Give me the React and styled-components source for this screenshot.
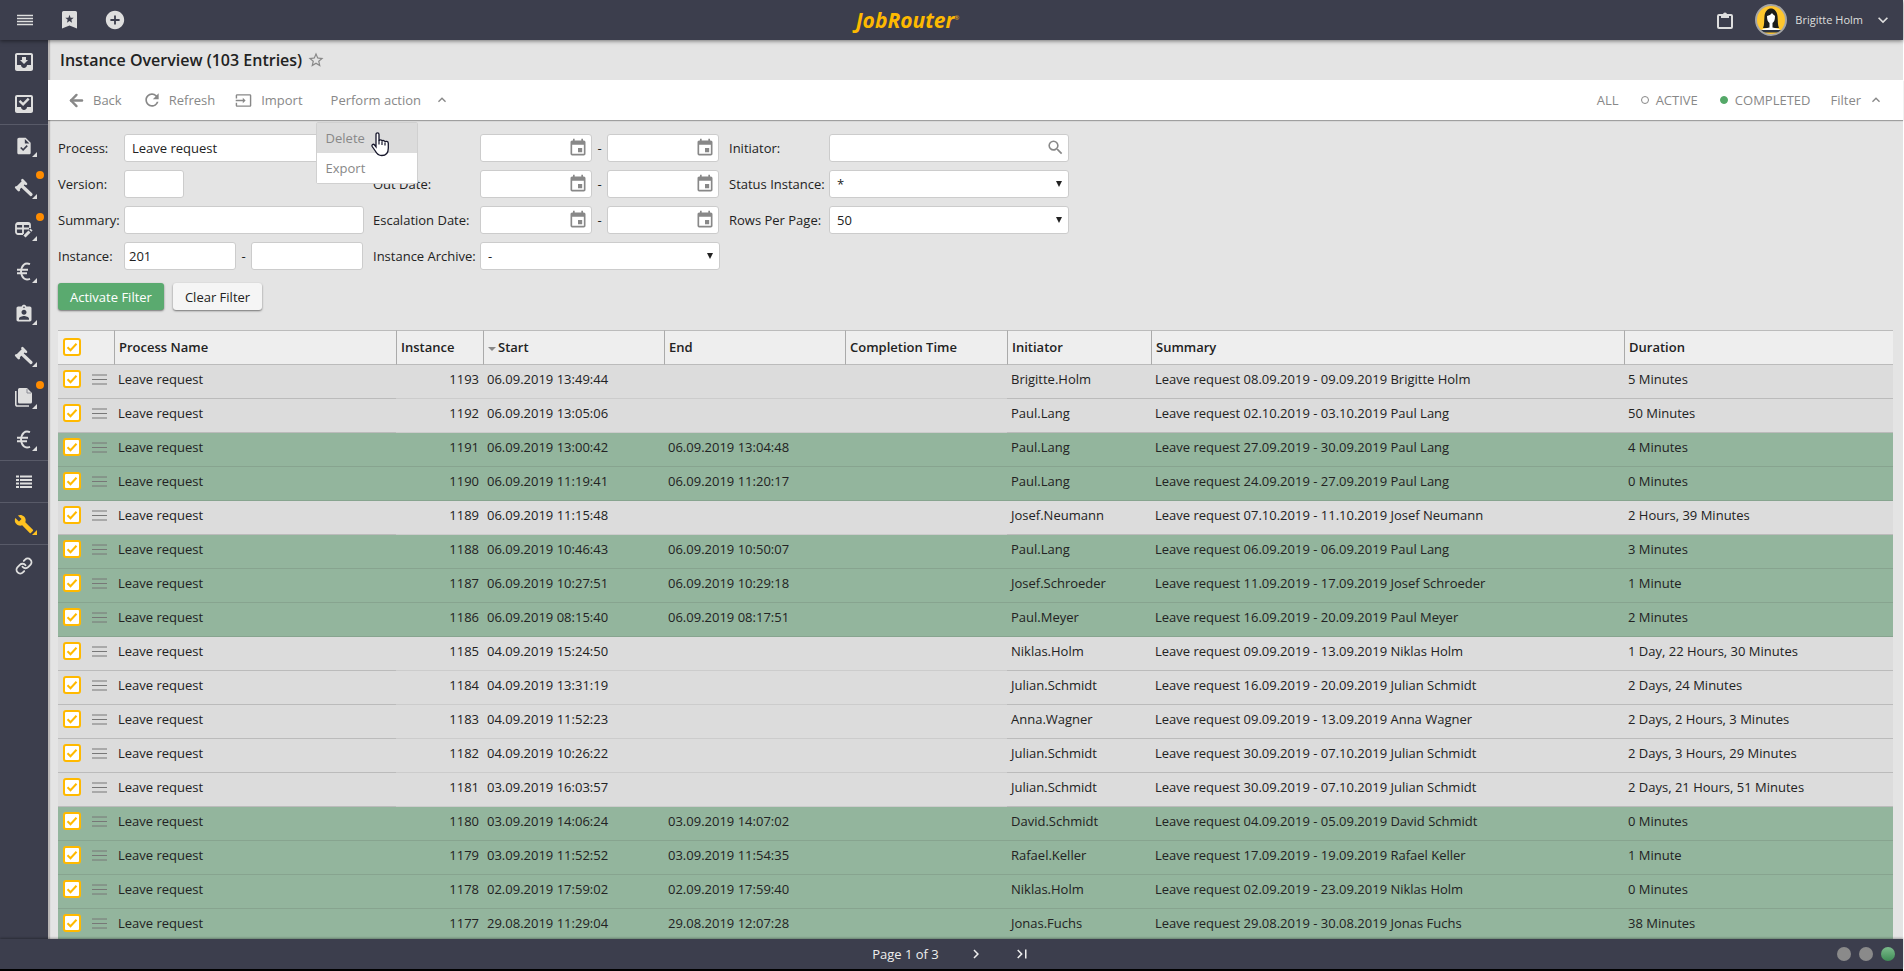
import React from "react";
import styled, { createGlobalStyle } from "styled-components";
import { ArrowLeft, Link as LinkIcon } from "lucide-react";
import {
  MdAddCircle,
  MdAssignmentInd,
  MdBuild,
  MdChevronRight,
  MdEvent,
  MdInput,
  MdKeyboardArrowDown,
  MdKeyboardArrowUp,
  MdLastPage,
  MdMoveToInbox,
  MdRefresh,
  MdSearch,
  MdStarBorder,
  MdTask,
} from "react-icons/md";

const GlobalStyle = createGlobalStyle`
  * {
    box-sizing: border-box;
  }
  body {
    margin: 0;
    background-color: white;
    color: #222;
    font-family: "Open Sans", "Noto Sans", sans-serif;
    font-size: 13px;
    line-height: 18px;
  }
  button, input, select {
    font: inherit;
    color: inherit;
    margin: 0;
  }
  a {
    color: inherit;
    text-decoration: none;
  }
`;

const Page = styled.div`
  height: 100vh;
  display: flex;
  flex-direction: column;
  padding-right: 1px;
  overflow: hidden;
`;

const Bare = styled.button`
  display: flex;
  align-items: center;
  padding: 0;
  border: none;
  background: none;
  cursor: pointer;
`;

/* top bar */
const TopBar = styled.header`
  flex: none;
  display: grid;
  grid-template-columns: 1fr auto 1fr;
  align-items: center;
  height: 40px;
  padding: 0 10px 0 2px;
  background-color: #3c3e4d;
  color: #dedede;
  box-shadow: 0 1px 4px rgba(0, 0, 0, 0.5);
  z-index: 3;
`;
const TopLeft = styled.div`
  display: flex;
  align-items: center;
`;
const TopButton = styled(Bare)`
  justify-content: center;
  width: 45px;
`;
const TopRight = styled.div`
  display: flex;
  align-items: center;
  justify-content: flex-end;
  font-size: 11px;
`;
const Logo = styled.a`
  display: flex;
  align-items: flex-start;
  margin-right: 80px;
  color: #fdb900;
  font-size: 21px;
  font-style: italic;
  font-weight: 700;
  line-height: 28px;
`;
const Reg = styled.span`
  font-size: 6px;
  line-height: 24px;
  font-style: normal;
  font-weight: 400;
`;
const User = styled(Bare)`
  gap: 8px;
  margin-left: 22px;
`;
const UserName = styled.span`
  margin-right: 2px;
`;

/* side bar */
const Body = styled.div`
  flex: 1;
  min-height: 0;
  display: flex;
`;
const SideBar = styled.nav`
  flex: none;
  width: 48px;
  padding-top: 1px;
  background-color: #3c3e4d;
  color: #dedede;
  box-shadow: 2px 0 1px #b9b6b6;
  z-index: 1;
`;
const SideItem = styled.a`
  position: relative;
  display: flex;
  align-items: center;
  justify-content: center;
  height: 42px;
  padding-right: 1px;
  border-bottom: 1px solid ${(props) => (props.$line ? "#585a68" : "transparent")};
  color: ${(props) => (props.$active ? "#ffc220" : "inherit")};

  ${(props) =>
    props.$more &&
    `&::after {
      content: "";
      position: absolute;
      right: 11px;
      bottom: 9px;
      border-left: 5px solid transparent;
      border-bottom: 5px solid currentColor;
    }`}
`;
const Dot = styled.span`
  position: absolute;
  top: 4px;
  right: 4px;
  width: 8px;
  height: 8px;
  border-radius: 50%;
  background-color: #ff8c00;
`;

/* main */
const Main = styled.main`
  flex: 1;
  min-width: 0;
  display: flex;
  flex-direction: column;
  background-color: #e4e4e4;
`;
const TitleBar = styled.div`
  flex: none;
  display: flex;
  align-items: center;
  gap: 5px;
  height: 40px;
  padding-left: 12px;
  color: #888;
`;
const Title = styled.h1`
  margin: 0;
  color: #222;
  font-size: 16px;
  line-height: 24px;
  font-weight: 600;
`;
const ToolBar = styled.div`
  flex: none;
  display: flex;
  align-items: center;
  justify-content: space-between;
  height: 40px;
  padding: 0 19px;
  background-color: white;
  color: #888;
  box-shadow: 0 1px 1px rgba(0, 0, 0, 0.3);
  z-index: 2;
`;
const Tools = styled.div`
  display: flex;
  align-items: center;
  gap: ${(props) => props.$gap}px;
`;
const Tool = styled(Bare)`
  gap: ${(props) => props.$gap || 7}px;
`;
const Status = styled.span`
  width: 8px;
  height: 8px;
  border: 1px solid ${(props) => (props.$on ? "#54a868" : "#888")};
  border-radius: 50%;
  background-color: ${(props) => (props.$on ? "#54a868" : "transparent")};
`;
const MenuWrap = styled.div`
  position: relative;
  margin-left: 8px;
`;
const Menu = styled.div`
  position: absolute;
  top: 31px;
  left: -15px;
  width: 102px;
  border: 1px solid #d0d0d0;
  border-radius: 2px;
  background-color: white;
`;
const MenuItem = styled(Bare)`
  width: 100%;
  height: 30px;
  padding-left: 9px;
  background-color: ${(props) => (props.$hover ? "#dcdcdc" : "white")};
`;
const Pointer = styled.svg`
  position: absolute;
  top: 9px;
  left: 54px;
`;

const Content = styled.div`
  flex: 1;
  min-height: 0;
  overflow: hidden;
  padding: 14px 10px 0 10px;
`;

/* filter form */
const Form = styled.form`
  margin-bottom: 20px;
`;
const Columns = styled.div`
  display: flex;
  align-items: flex-start;
  gap: 9px;
`;
const Column = styled.div`
  display: grid;
  grid-template-columns: ${(props) => props.$label}px 240px;
  grid-auto-rows: 28px;
  row-gap: 8px;
  align-items: center;
`;
const Pair = styled.div`
  display: grid;
  grid-template-columns: 112px 15px 112px;
  align-items: center;
  text-align: center;
`;
const Field = styled.div`
  position: relative;
  color: #888;

  svg {
    position: absolute;
    top: ${(props) => props.$top || 4}px;
    right: ${(props) => props.$right || 4}px;
    pointer-events: none;
  }
`;
const Input = styled.input`
  display: block;
  width: ${(props) => (props.$short ? "60px" : "100%")};
  height: 28px;
  padding: 0 ${(props) => props.$pad || 4}px;
  border: 1px solid #ccc;
  border-radius: 3px;
  background-color: white;
  color: #222;
`;
const Select = styled.select`
  display: block;
  width: 100%;
  height: 28px;
  padding: 0 7px;
  border: 1px solid #ccc;
  border-radius: 3px;
  background-color: white;
  color: #222;
  appearance: none;
`;
const Buttons = styled.div`
  display: flex;
  gap: 9px;
  margin-top: 13px;
`;
const Button = styled.button`
  height: 27px;
  padding: 0 12px;
  border: none;
  border-radius: 3px;
  background-color: ${(props) => (props.$primary ? "#5aaa6f" : "#f5f5f5")};
  color: ${(props) => (props.$primary ? "white" : "#222")};
  box-shadow: 0 1px 2px rgba(0, 0, 0, 0.5);
`;

/* table */
const Table = styled.table`
  width: 100%;
  table-layout: fixed;
  border-collapse: separate;
  border-spacing: 0;
`;
const Th = styled.th`
  height: 35px;
  padding: 0 4px 1px 4px;
  border-top: 1px solid #bbb;
  border-bottom: 1px solid #bbb;
  border-left: ${(props) => (props.$first ? "none" : "1px solid #aaa")};
  background-color: #eee;
  font-weight: 600;
  text-align: left;
  white-space: nowrap;
`;
const Td = styled.td`
  height: 34px;
  padding: 5px 4px 0 4px;
  border-bottom: 1px solid ${(props) => (props.$strong ? "#bbb" : "#ccc")};
  text-align: ${(props) => (props.$right ? "right" : "left")};
  vertical-align: top;
  white-space: nowrap;
  overflow: hidden;
`;
const Tr = styled.tr`
  background-color: ${(props) => (props.$done ? "#93b59d" : "#dcdcdc")};

  ${Td} {
    ${(props) => props.$done && "border-bottom-color: #87a48f;"}
  }
`;
const CheckCell = styled.div`
  display: flex;
  align-items: center;
  gap: 11px;
  padding-left: 1px;
  color: #777;
`;
const CheckWrap = styled.span`
  position: relative;
  width: 18px;
  height: 18px;

  svg {
    position: absolute;
    top: 0;
    left: 0;
    pointer-events: none;
  }
`;
const CheckBox = styled.input`
  display: block;
  width: 18px;
  height: 18px;
  border: 2px solid #ffb900;
  border-radius: 3px;
  background-color: white;
  appearance: none;
`;
const SortArrow = styled.span`
  display: inline-block;
  margin-right: 2px;
  border: 4px solid transparent;
  border-top-color: #888;
  border-bottom: none;
  vertical-align: middle;
`;

/* footer */
const Footer = styled.footer`
  flex: none;
  display: grid;
  grid-template-columns: 1fr auto 1fr;
  align-items: center;
  height: 30px;
  padding: 0 8px;
  background-color: #3c3e4d;
  color: #eee;
  z-index: 3;
  box-shadow: 0 -1px 2px rgba(0, 0, 0, 0.3);
`;
const Pager = styled.div`
  grid-column: 2;
  display: flex;
  align-items: center;
  gap: 28px;
  font-weight: 500;
`;
const Lights = styled.div`
  display: flex;
  justify-content: flex-end;
  gap: 8px;
`;
const Light = styled.span`
  width: 14px;
  height: 14px;
  border-radius: 50%;
  background: ${(props) =>
    props.$on ? "linear-gradient(#7cbc8c, #3f8c56)" : "#8a8a8a"};
`;
const Bottom = styled.div`
  flex: none;
  height: 2px;
  background-color: black;
`;

const MenuLines = () => (
  <svg width="16" height="12" viewBox="0 0 16 12" stroke="currentColor">
    <path d="M0 1.500h16M0 4.500h16M0 7.500h16M0 10.500h16" strokeWidth="1.400" />
  </svg>
);
const BookmarkStar = () => (
  <svg width="15" height="18" viewBox="0 0 15 18">
    <path d="M1.500 0h12a1.500 1.500 0 0 1 1.500 1.500V17.500l-7.500-3-7.500 3V1.500A1.500 1.500 0 0 1 1.500 0z" fill="currentColor" />
    <path d="M7.500 3.800l1.100 2.900 3.100.1-2.400 1.900.8 3-2.600-1.700-2.600 1.700.8-3-2.400-1.900 3.100-.1z" fill="#3c3e4d" />
  </svg>
);
const ClipboardIcon = () => (
  <svg width="16" height="17" viewBox="0 0 16 17" fill="none" stroke="currentColor">
    <rect x="1" y="3" width="14" height="13" rx="1" strokeWidth="2" />
    <path d="M4 2.500h2a2 2 0 0 1 4 0h2V6H4z" fill="currentColor" stroke="none" />
  </svg>
);
const Avatar = () => (
  <svg width="32" height="32" viewBox="0 0 32 32">
    <circle cx="16" cy="16" r="15" fill="#ffc62d" />
    <path d="M8 24c1.500-3 1-7 1.500-12 .5-5 3.500-7.500 6.500-7.500s6 2.500 6.500 7.500c.5 5 0 9 1.500 12z" fill="#1d1d1b" />
    <path d="M12 12c2-.5 4-1.500 5-3 1 1.500 2 2 3 3 0 4-1 6-2.500 7v4.500l7 1.500v2h-17v-2l7-1.500V19c-1.500-1-2.500-3-2.500-7z" fill="white" />
    <path d="M5 26h22l-3 2.500H8z" fill="#2b3342" />
    <circle cx="16" cy="16" r="15" fill="none" stroke="#a5a5a5" strokeWidth="2" />
  </svg>
);
const InboxCheck = () => (
  <svg width="24" height="24" viewBox="0 0 24 24" fill="currentColor">
    <path d="M19 3H5a2 2 0 0 0-2 2v14c0 1.100.9 2 2 2h14c1.100 0 2-.9 2-2V5a2 2 0 0 0-2-2zm0 12h-4c0 1.660-1.350 3-3 3s-3-1.340-3-3H5V5h14z" />
    <path d="M7.500 8.800l3.600 3.600 5.600-5.800" fill="none" stroke="currentColor" strokeWidth="2.400" />
  </svg>
);
const Hammer = () => (
  <svg width="20" height="20" viewBox="0 0 20 20" stroke="currentColor" fill="none">
    <path d="M4 10l6-6" strokeWidth="4.500" />
    <path d="M2.200 9.400l2.600 2.600M8.400 2.200l3.600 3.600" strokeWidth="2.600" strokeLinecap="round" />
    <path d="M8 8l9 8.500" strokeWidth="3.200" strokeLinecap="round" />
  </svg>
);
const TableEdit = () => (
  <svg width="18" height="18" viewBox="0 0 18 18" stroke="currentColor" fill="none">
    <path d="M8 13H3a2 2 0 0 1-2-2V4a2 2 0 0 1 2-2h10a2 2 0 0 1 2 2v3M1 7.500h13M8 2v11" strokeWidth="1.800" />
    <path d="M2 3h12" strokeWidth="2" />
    <path d="M9.500 15.500l5-5" strokeWidth="3" />
    <path d="M15.300 9.700l1.200-1.200" strokeWidth="3" />
  </svg>
);
const Pages = () => (
  <svg width="17" height="19" viewBox="0 0 17 19">
    <path d="M4.500 0H12l5 5v9a1.500 1.500 0 0 1-1.500 1.500h-11A1.500 1.500 0 0 1 3 14V1.500A1.500 1.500 0 0 1 4.500 0z" fill="currentColor" />
    <path d="M12 .8V5h4.200" fill="none" stroke="#8b8c95" />
    <path d="M.8 3v13.500a1.500 1.500 0 0 0 1.500 1.500H14" fill="none" stroke="currentColor" strokeWidth="1.600" />
  </svg>
);
const Euro = () => (
  <svg width="14" height="19" viewBox="0 0 14 19" stroke="currentColor" fill="none">
    <path d="M13 2.200C8 .2 4.500 3 4 9.500c.5 6.500 4 9.300 9 7.300M0 7.700h11M0 11.200h10" strokeWidth="1.900" />
  </svg>
);
const ListLines = () => (
  <svg width="16" height="14" viewBox="0 0 16 14" stroke="currentColor">
    <path d="M0 1.500h3M4 1.500h12M0 5h3M4 5h12M0 8.500h3M4 8.500h12M0 12h3M4 12h12" strokeWidth="2" />
  </svg>
);
const Burger = () => (
  <svg width="15" height="11" viewBox="0 0 15 11" stroke="currentColor">
    <path d="M0 1h15M0 5.500h15M0 10h15" strokeWidth="1" />
  </svg>
);
const DropArrow = () => (
  <svg width="6" height="6" viewBox="0 0 6 6">
    <path d="M0 0h6L3 6z" fill="#222" />
  </svg>
);
const HandPointer = () => (
  <Pointer width="19" height="25" viewBox="0 0 19 25">
    <path
      d="M5 2.500C5 .3 8 .3 8 2.500V9c.3-1.700 3-1.500 3 .3.500-1.300 3-1 3 .7.600-1.200 3.300-.8 3.300 1.200V16c0 5-2.300 7.500-6.500 7.500-3.500 0-5-1.500-6.500-4.500L1.200 14.500c-.8-1.800 1-3 2.400-1.500L5 14.800z"
      fill="white"
      stroke="#15152a"
      strokeWidth="1.300"
    />
    <path d="M8 8.500v4M11 9.500v3.500M14 10.500v3" stroke="#15152a" strokeWidth="1.200" />
  </Pointer>
);

const sideItems = [
  { name: "Inbox", icon: <MdMoveToInbox size={24} /> },
  { name: "Tasks", icon: <InboxCheck />, line: true },
  { name: "Processes", icon: <MdTask size={20} />, more: true },
  { name: "Tools", icon: <Hammer />, more: true, dot: true },
  { name: "Tables", icon: <TableEdit />, more: true, dot: true },
  { name: "Invoices", icon: <Euro />, more: true },
  { name: "Staff", icon: <MdAssignmentInd size={20} />, more: true },
  { name: "Orders", icon: <Hammer />, more: true },
  { name: "Documents", icon: <Pages />, more: true, dot: true },
  { name: "Payments", icon: <Euro />, more: true, line: true },
  { name: "Lists", icon: <ListLines />, line: true },
  { name: "Administration", icon: <MdBuild size={20} />, more: true, line: true, active: true },
  { name: "Links", icon: <LinkIcon size={18} strokeWidth={2.5} /> },
];

const columns = [
  { title: "Process Name", width: 282 },
  { title: "Instance", width: 87 },
  { title: "Start", width: 181, sort: true },
  { title: "End", width: 181 },
  { title: "Completion Time", width: 162 },
  { title: "Initiator", width: 144 },
  { title: "Summary", width: 473 },
  { title: "Duration" },
];

const rows = [
  [1193, "06.09.2019 13:49:44", "", "Brigitte.Holm", "08.09.2019 - 09.09.2019 Brigitte Holm", "5 Minutes"],
  [1192, "06.09.2019 13:05:06", "", "Paul.Lang", "02.10.2019 - 03.10.2019 Paul Lang", "50 Minutes"],
  [1191, "06.09.2019 13:00:42", "06.09.2019 13:04:48", "Paul.Lang", "27.09.2019 - 30.09.2019 Paul Lang", "4 Minutes"],
  [1190, "06.09.2019 11:19:41", "06.09.2019 11:20:17", "Paul.Lang", "24.09.2019 - 27.09.2019 Paul Lang", "0 Minutes"],
  [1189, "06.09.2019 11:15:48", "", "Josef.Neumann", "07.10.2019 - 11.10.2019 Josef Neumann", "2 Hours, 39 Minutes"],
  [1188, "06.09.2019 10:46:43", "06.09.2019 10:50:07", "Paul.Lang", "06.09.2019 - 06.09.2019 Paul Lang", "3 Minutes"],
  [1187, "06.09.2019 10:27:51", "06.09.2019 10:29:18", "Josef.Schroeder", "11.09.2019 - 17.09.2019 Josef Schroeder", "1 Minute"],
  [1186, "06.09.2019 08:15:40", "06.09.2019 08:17:51", "Paul.Meyer", "16.09.2019 - 20.09.2019 Paul Meyer", "2 Minutes"],
  [1185, "04.09.2019 15:24:50", "", "Niklas.Holm", "09.09.2019 - 13.09.2019 Niklas Holm", "1 Day, 22 Hours, 30 Minutes"],
  [1184, "04.09.2019 13:31:19", "", "Julian.Schmidt", "16.09.2019 - 20.09.2019 Julian Schmidt", "2 Days, 24 Minutes"],
  [1183, "04.09.2019 11:52:23", "", "Anna.Wagner", "09.09.2019 - 13.09.2019 Anna Wagner", "2 Days, 2 Hours, 3 Minutes"],
  [1182, "04.09.2019 10:26:22", "", "Julian.Schmidt", "30.09.2019 - 07.10.2019 Julian Schmidt", "2 Days, 3 Hours, 29 Minutes"],
  [1181, "03.09.2019 16:03:57", "", "Julian.Schmidt", "30.09.2019 - 07.10.2019 Julian Schmidt", "2 Days, 21 Hours, 51 Minutes"],
  [1180, "03.09.2019 14:06:24", "03.09.2019 14:07:02", "David.Schmidt", "04.09.2019 - 05.09.2019 David Schmidt", "0 Minutes"],
  [1179, "03.09.2019 11:52:52", "03.09.2019 11:54:35", "Rafael.Keller", "17.09.2019 - 19.09.2019 Rafael Keller", "1 Minute"],
  [1178, "02.09.2019 17:59:02", "02.09.2019 17:59:40", "Niklas.Holm", "02.09.2019 - 23.09.2019 Niklas Holm", "0 Minutes"],
  [1177, "29.08.2019 11:29:04", "29.08.2019 12:07:28", "Jonas.Fuchs", "29.08.2019 - 30.08.2019 Jonas Fuchs", "38 Minutes"],
];

const Check = ({ label }) => (
  <CheckWrap>
    <CheckBox type="checkbox" defaultChecked aria-label={label} />
    <svg width="18" height="18" viewBox="0 0 18 18">
      <path d="M4.500 9.200l3 3 6-6.400" fill="none" stroke="#ffb900" strokeWidth="2" />
    </svg>
  </CheckWrap>
);

const DateInput = ({ label, id }) => (
  <Field>
    <Input type="text" id={id} aria-label={label} />
    <MdEvent size={20} />
  </Field>
);

const DateRange = ({ label, id }) => (
  <Pair>
    <DateInput id={id} />
    <span>-</span>
    <DateInput label={`${label} to`} />
  </Pair>
);

const SelectField = ({ id, value }) => (
  <Field $top={11} $right={7}>
    <Select id={id} defaultValue={value}>
      <option value={value}>{value}</option>
    </Select>
    <DropArrow />
  </Field>
);

const FilterForm = () => (
  <Form>
    <Columns>
      <Column $label={66}>
        <label htmlFor="process">Process:</label>
        <Input id="process" $pad={7} defaultValue="Leave request" />
        <label htmlFor="version">Version:</label>
        <Input id="version" $short />
        <label htmlFor="summary">Summary:</label>
        <Input id="summary" />
        <label htmlFor="instance">Instance:</label>
        <Pair>
          <Input id="instance" defaultValue="201" />
          <span>-</span>
          <Input aria-label="Instance to" />
        </Pair>
      </Column>
      <Column $label={107}>
        <label htmlFor="start">Start:</label>
        <DateRange id="start" label="Start" />
        <label htmlFor="out">Out Date:</label>
        <DateRange id="out" label="Out Date" />
        <label htmlFor="escalation">Escalation Date:</label>
        <DateRange id="escalation" label="Escalation Date" />
        <label htmlFor="archive">Instance Archive:</label>
        <SelectField id="archive" value="-" />
      </Column>
      <Column $label={100}>
        <label htmlFor="initiator">Initiator:</label>
        <Field>
          <Input id="initiator" />
          <MdSearch size={19} />
        </Field>
        <label htmlFor="status">Status Instance:</label>
        <SelectField id="status" value="*" />
        <label htmlFor="rows">Rows Per Page:</label>
        <SelectField id="rows" value="50" />
      </Column>
    </Columns>
    <Buttons>
      <Button type="button" $primary>Activate Filter</Button>
      <Button type="button">Clear Filter</Button>
    </Buttons>
  </Form>
);

const InstanceTable = () => (
  <Table>
    <colgroup>
      <col width={56} />
      {columns.map((col) => (
        <col key={col.title} width={col.width} />
      ))}
    </colgroup>
    <thead>
      <tr>
        <Th $first>
          <CheckCell>
            <Check label="Select all" />
          </CheckCell>
        </Th>
        {columns.map((col) => (
          <Th key={col.title}>
            {col.sort && <SortArrow />}
            {col.title}
          </Th>
        ))}
      </tr>
    </thead>
    <tbody>
      {rows.map(([id, start, end, initiator, summary, duration]) => (
        <Tr key={id} $done={end !== ""}>
          <Td $strong>
            <CheckCell>
              <Check label={`Select ${id}`} />
              <Burger />
            </CheckCell>
          </Td>
          <Td $strong>Leave request</Td>
          <Td $right>{id}</Td>
          <Td>{start}</Td>
          <Td>{end}</Td>
          <Td />
          <Td $strong>{initiator}</Td>
          <Td $strong>Leave request {summary}</Td>
          <Td $strong>{duration}</Td>
        </Tr>
      ))}
    </tbody>
  </Table>
);

const App = () => {
  return (
    <Page>
      <GlobalStyle />
      <TopBar>
        <TopLeft>
          <TopButton aria-label="Menu"><MenuLines /></TopButton>
          <TopButton aria-label="Bookmarks"><BookmarkStar /></TopButton>
          <TopButton aria-label="Add"><MdAddCircle size={22} /></TopButton>
        </TopLeft>
        <Logo href="#">
          JobRouter<Reg>®</Reg>
        </Logo>
        <TopRight>
          <Bare aria-label="Clipboard"><ClipboardIcon /></Bare>
          <User>
            <Avatar />
            <UserName>Brigitte Holm</UserName>
            <MdKeyboardArrowDown size={20} />
          </User>
        </TopRight>
      </TopBar>
      <Body>
        <SideBar>
          {sideItems.map((item) => (
            <SideItem
              key={item.name}
              href="#"
              aria-label={item.name}
              $line={item.line}
              $more={item.more}
              $active={item.active}
            >
              {item.icon}
              {item.dot && <Dot />}
            </SideItem>
          ))}
        </SideBar>
        <Main>
          <TitleBar>
            <Title>Instance Overview (103 Entries)</Title>
            <MdStarBorder size={18} />
          </TitleBar>
          <ToolBar>
            <Tools $gap={20}>
              <Tool><ArrowLeft size={19} strokeWidth={3} />Back</Tool>
              <Tool><MdRefresh size={20} />Refresh</Tool>
              <Tool $gap={9}><MdInput size={17} />Import</Tool>
              <MenuWrap>
                <Tool $gap={13}>Perform action<MdKeyboardArrowUp size={16} /></Tool>
                <Menu>
                  <MenuItem $hover>Delete</MenuItem>
                  <MenuItem>Export</MenuItem>
                  <HandPointer />
                </Menu>
              </MenuWrap>
            </Tools>
            <Tools $gap={20}>
              <Tools $gap={22}>
                <Tool>ALL</Tool>
                <Tool><Status />ACTIVE</Tool>
                <Tool><Status $on />COMPLETED</Tool>
              </Tools>
              <Tool>Filter<MdKeyboardArrowUp size={16} /></Tool>
            </Tools>
          </ToolBar>
          <Content>
            <FilterForm />
            <InstanceTable />
          </Content>
        </Main>
      </Body>
      <Footer>
        <Pager>
          <span>Page 1 of 3</span>
          <Bare aria-label="Next page"><MdChevronRight size={18} /></Bare>
          <Bare aria-label="Last page"><MdLastPage size={18} /></Bare>
        </Pager>
        <Lights>
          <Light />
          <Light />
          <Light $on />
        </Lights>
      </Footer>
      <Bottom />
    </Page>
  );
};

export default App;
